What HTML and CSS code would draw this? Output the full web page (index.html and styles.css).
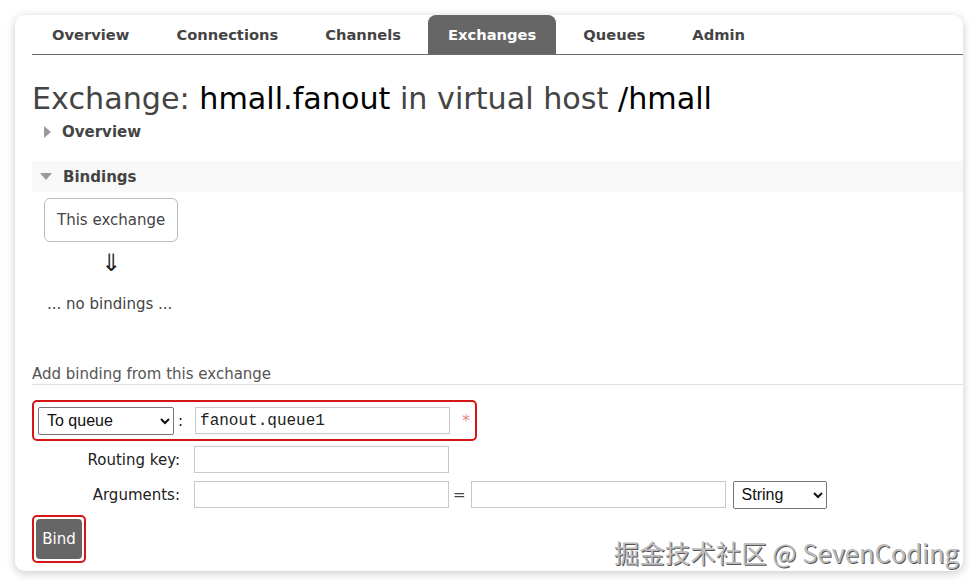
FILE: index.html
```html
<!DOCTYPE html>
<html lang="en">

<head>
    <meta charset="UTF-8">
    <title>Exchange: hmall.fanout</title>
    <link rel="stylesheet" href="styles.css">
</head>

<body>
    <div class="card">
        <ul class="tabs">
            <li>Overview</li>
            <li>Connections</li>
            <li>Channels</li>
            <li class="active">Exchanges</li>
            <li>Queues</li>
            <li>Admin</li>
        </ul>

        <h1>Exchange: <b>hmall.fanout</b> in virtual host <b>/hmall</b></h1>

        <div class="section-head closed">
            <span class="arrow-right"></span>Overview
        </div>

        <div class="section-head open">
            <span class="arrow-down"></span>Bindings
        </div>

        <div class="bindings">
            <div class="this-exchange">This exchange</div>
            <div class="down">&#8659;</div>
            <p class="no-bindings">... no bindings ...</p>
        </div>

        <h3 class="form-title">Add binding from this exchange</h3>

        <div class="form">
            <div class="row highlight">
                <select class="dest">
                    <option>To queue</option>
                </select>
                <span class="colon">:</span>
                <input class="mono" value="fanout.queue1">
                <span class="required">*</span>
            </div>
            <div class="row">
                <label>Routing key:</label>
                <input>
            </div>
            <div class="row">
                <label>Arguments:</label>
                <input>
                <span class="eq">=</span>
                <input>
                <select class="type">
                    <option>String</option>
                </select>
            </div>
            <div class="bind-wrap">
                <button>Bind</button>
            </div>
        </div>

        <div class="watermark">掘金技术社区 @ SevenCoding</div>
    </div>
</body>

</html>
```

FILE: styles.css
```css
body {
    margin: 0;
    background-color: #ffffff;
    font-family: 'DejaVu Sans', Verdana, sans-serif;
    color: #444444;
}

.card {
    position: relative;
    margin: 15px;
    width: 948px;
    height: 556px;
    box-sizing: border-box;
    padding-left: 17px;
    background-color: #ffffff;
    border-radius: 10px;
    box-shadow: 0 2px 10px rgba(0, 0, 0, 0.22);
    overflow: hidden;
}

.tabs {
    display: flex;
    list-style: none;
    margin: 0;
    padding: 0;
    height: 39px;
    border-bottom: 1px solid #6a6a6a;
}

.tabs li {
    padding: 0 20px;
    margin-right: 7px;
    line-height: 39px;
    font-size: 14.7px;
    font-weight: bold;
    color: #444444;
}

.tabs li.active {
    background-color: #666666;
    color: #ffffff;
    border-radius: 8px 8px 0 0;
}

h1 {
    margin: 26px 0 0 0;
    font-size: 30.2px;
    font-weight: normal;
    color: #444444;
    line-height: 36px;
}

h1 b {
    font-weight: normal;
    color: #000000;
}

.section-head {
    display: flex;
    align-items: center;
    font-size: 15px;
    font-weight: bold;
    color: #444444;
    height: 31px;
}

.section-head.closed {
    margin-top: 3px;
    height: 24px;
}

.section-head.open {
    margin-top: 17px;
    background-color: #f8f8f8;
}

.arrow-right {
    width: 0;
    height: 0;
    margin: 0 11px 0 12px;
    border-top: 6px solid transparent;
    border-bottom: 6px solid transparent;
    border-left: 7px solid #999999;
}

.arrow-down {
    width: 0;
    height: 0;
    margin: 0 11px 0 8px;
    border-left: 6px solid transparent;
    border-right: 6px solid transparent;
    border-top: 7px solid #999999;
}

.bindings {
    padding-left: 12px;
}

.this-exchange {
    display: inline-block;
    margin-top: 6px;
    padding: 0 12px;
    height: 42px;
    line-height: 42px;
    font-size: 15px;
    border: 1px solid #bbbbbb;
    border-radius: 6px;
    color: #444444;
}

.down {
    width: 134px;
    text-align: center;
    font-size: 24px;
    line-height: 28px;
    margin-top: 7px;
    color: #222222;
}

.no-bindings {
    margin: 18px 0 0 3px;
    font-size: 15px;
}

.form-title {
    margin: 52px 0 0 0;
    padding-bottom: 1px;
    font-size: 15px;
    font-weight: normal;
    color: #555555;
    border-bottom: 1px solid #e0e0e0;
}

.form {
    margin-top: 15px;
}

.row {
    display: flex;
    align-items: center;
    height: 35px;
}

.row.highlight {
    width: 441px;
    height: 37px;
    border: 2px solid #d41616;
    border-radius: 5px;
    margin-bottom: 1px;
}

.row label {
    width: 148px;
    text-align: right;
    font-size: 15px;
    color: #222222;
}

.row input {
    width: 255px;
    height: 27px;
    box-sizing: border-box;
    margin-left: 14px;
    border: 1px solid #c8c8c8;
    font-size: 14px;
    padding: 0 4px;
}

.row input.mono {
    margin-left: 12px;
    font-family: 'Liberation Mono', monospace;
    font-size: 16px;
    color: #222222;
}

select {
    height: 28px;
    font-family: 'Liberation Sans', Arial, sans-serif;
    font-size: 16px;
    color: #111111;
    border: 1px solid #767676;
    border-radius: 2px;
    background-color: #ffffff;
    padding: 0 4px;
}

.dest {
    width: 136px;
    margin-left: 4px;
}

.colon {
    margin-left: 4px;
    font-size: 15px;
    color: #222222;
}

.required {
    margin-left: 12px;
    color: #e88888;
    font-size: 16px;
}

.eq {
    margin: 0 5px 0 4px;
    font-size: 15px;
    color: #444444;
}

.eq + input {
    margin-left: 0;
}

.type {
    width: 94px;
    margin-left: 7px;
}

.bind-wrap {
    display: inline-block;
    margin-top: 3px;
    padding: 2px;
    border: 2px solid #d41616;
    border-radius: 5px;
}

button {
    display: block;
    width: 46px;
    height: 40px;
    background-color: #666666;
    color: #ffffff;
    border: none;
    border-radius: 4px;
    font-family: 'DejaVu Sans', Verdana, sans-serif;
    font-size: 15px;
    padding: 0;
}

.watermark {
    position: absolute;
    right: 4px;
    bottom: 1px;
    font-family: 'Noto Sans CJK SC', 'Noto Sans', sans-serif;
    font-size: 25.5px;
    color: #bdbdbd;
    text-shadow: 1px 1px 0 #555555, -1px 0 0 #ffffff;
}
```
